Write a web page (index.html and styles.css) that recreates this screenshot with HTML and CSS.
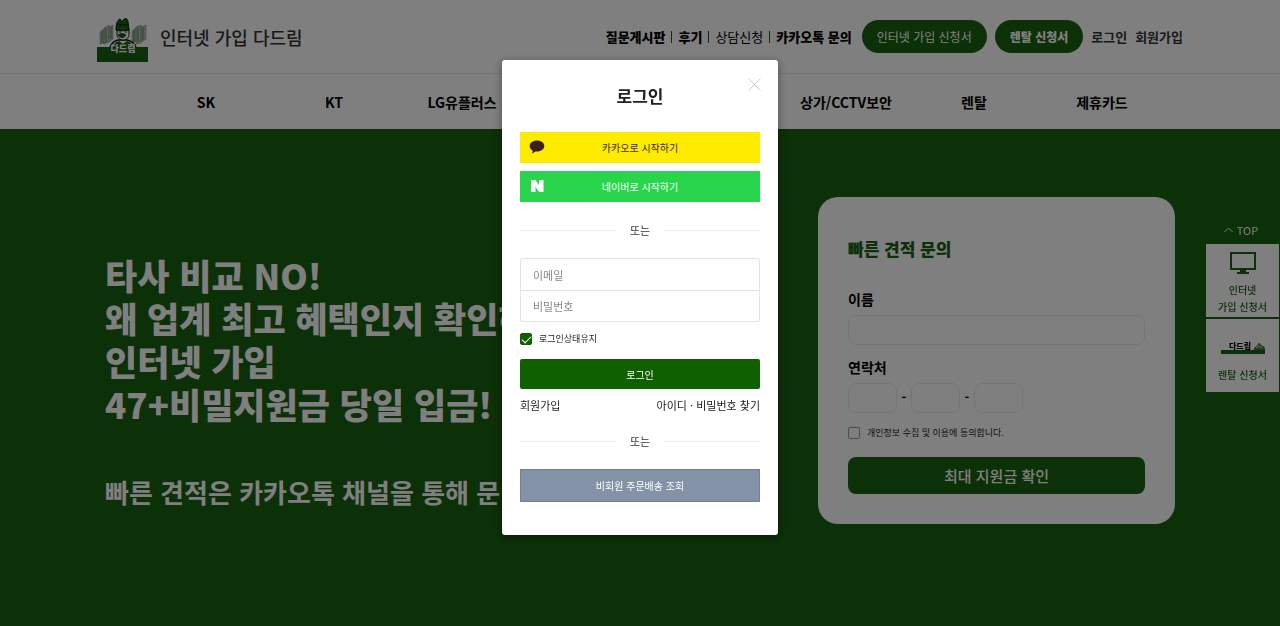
FILE: index.html
```html
<!DOCTYPE html>
<html lang="ko">
<head>
  <meta charset="UTF-8">
  <meta name="viewport" content="width=device-width, initial-scale=1">
  <title>인터넷 가입 다드림</title>
  <link rel="stylesheet" href="styles.css">
</head>
<body>
  <header class="header">
    <a class="brand" href="#">
      <svg class="brand-logo" viewBox="0 0 51 44" aria-hidden="true">
        <g fill="#b5c4b3" stroke="#8a8a8a" stroke-width=".6">
          <path d="M3 14l4-3v14l-4 1zM7 10l5-3v17l-5 2zM12 9l4-2v14l-4 3z"/>
          <path d="M35 13l4-3v13l-4 2zM39 9l5-2v18l-5 1zM44 9l5-2v14l-5 3z"/>
        </g>
        <path d="M5 13v12M9 10v15M14 9v12M37 12v12M41 9v15M46 9v13" stroke="#5d7d59"/>
        <path d="M13 30c1-5 4-7 8-8h9c5 1 8 3 9 8z" fill="#fff" stroke="#111" stroke-width="1.500"/>
        <path d="M20 11h12v5c0 4-3 6-6 6s-6-2-6-6z" fill="#fff" stroke="#111"/>
        <path d="M19 12c0-5 1-10 4-11l2 3c1-4 6-5 6 0l1 8c-4 1-9 1-13 0z" fill="#186010" stroke="#111"/>
        <path d="M20 6c3 2 7 0 11 1" fill="none" stroke="#111"/>
        <path d="M22 14h2M28 14h2" stroke="#111"/>
        <path d="M21 17c2-2 6-2 8 0-1 3-6 4-8 0z" fill="#186010" stroke="#111" stroke-width=".5"/>
        <path d="M16 30c0-4 3-6 6-7l4 3 4-3c3 1 6 3 6 7z" fill="#186010"/>
        <path d="M0 29h51v15H0z" fill="#186010"/>
        <text class="logo-text" x="26" y="34" text-anchor="middle">다드림</text>
      </svg>
      <span class="brand-name">인터넷 가입 다드림</span>
    </a>
    <div class="header-right">
      <nav class="quick-links">
        <a class="strong" href="#">질문게시판</a>
        <a class="strong" href="#">후기</a>
        <a href="#">상담신청</a>
        <a class="strong" href="#">카카오톡 문의</a>
      </nav>
      <a class="pill" href="#">인터넷 가입 신청서</a>
      <a class="pill strong" href="#">렌탈 신청서</a>
      <nav class="account">
        <a href="#">로그인</a>
        <a href="#">회원가입</a>
      </nav>
    </div>
  </header>

  <nav class="main-nav">
    <a href="#">SK</a>
    <a href="#">KT</a>
    <a href="#">LG유플러스</a>
    <a class="after-gap" href="#">상가/CCTV보안</a>
    <a href="#">렌탈</a>
    <a href="#">제휴카드</a>
  </nav>

  <main class="hero">
    <section class="hero-copy">
      <h1>타사 비교 NO!<br>왜 업계 최고 혜택인지 확인하<br>인터넷 가입<br>47+비밀지원금 당일 입금!</h1>
      <p>빠른 견적은 카카오톡 채널을 통해 문</p>
    </section>

    <form class="quote">
      <h2>빠른 견적 문의</h2>
      <label class="field-label" for="name">이름</label>
      <input class="field" id="name" type="text">
      <label class="field-label" for="phone1">연락처</label>
      <div class="phone">
        <input class="field" id="phone1" type="text">
        <span>-</span>
        <input class="field" type="text" aria-label="연락처 가운데 자리">
        <span>-</span>
        <input class="field" type="text" aria-label="연락처 끝자리">
      </div>
      <label class="agree"><input class="check" type="checkbox">개인정보 수집 및 이용에 동의합니다.</label>
      <button class="quote-submit" type="button">최대 지원금 확인</button>
    </form>
  </main>

  <aside class="side">
    <a class="side-top" href="#">
      <svg width="9" height="6" viewBox="0 0 9 6" aria-hidden="true"><path d="M.5 5l4-4 4 4" fill="none" stroke="currentColor"/></svg>
      TOP
    </a>
    <a class="side-box" href="#">
      <svg width="28" height="24" viewBox="0 0 28 24" aria-hidden="true">
        <path d="M2 2h24v16H2z" fill="none" stroke="#186010" stroke-width="2"/>
        <path d="M11 18h6v3h3v2H8v-2h3z" fill="#186010"/>
      </svg>
      <span>인터넷<br>가입 신청서</span>
    </a>
    <a class="side-box" href="#">
      <svg width="44" height="14" viewBox="0 0 44 14" aria-hidden="true">
        <text class="side-logo-text" x="8" y="9">다드림</text>
        <path d="M0 10h44v4H0z" fill="#186010"/>
        <path d="M33 10c0-3 2-3 3-4l2-3 3 3c2 0 3 2 3 4z" fill="#3d7a36" stroke="#555" stroke-width=".5"/>
        <path d="M35 8l3-2 3 2" fill="none" stroke="#ddd"/>
      </svg>
      <span>렌탈 신청서</span>
    </a>
  </aside>

  <div class="backdrop">
    <div class="modal" role="dialog" aria-modal="true" aria-labelledby="login-title">
      <button class="close" type="button" aria-label="닫기">
        <svg width="13" height="13" viewBox="0 0 13 13"><path d="M.5.5l12 12M12.500.5l-12 12" stroke="#ccc" fill="none"/></svg>
      </button>
      <h2 id="login-title">로그인</h2>
      <button class="social kakao" type="button">
        <svg width="16" height="14" viewBox="0 0 16 14" aria-hidden="true"><path d="M8 .5C3.800.5.7 2.900.7 6c0 2 1.200 3.700 3.100 4.700L3 13.600l3.500-2.200c.5.100 1 .1 1.500.1 4.200 0 7.300-2.400 7.300-5.500S12.200.5 8 .5z" fill="#3c1e1e"/></svg>
        카카오로 시작하기
      </button>
      <button class="social naver" type="button">
        <svg width="16" height="14" viewBox="0 0 16 14" aria-hidden="true"><path d="M2 1h4.500l3.500 5.200V1h4.500v12H10L6.500 7.800V13H2z" fill="#fff"/></svg>
        네이버로 시작하기
      </button>
      <div class="divider">또는</div>
      <form class="login">
        <div class="credentials">
          <input type="email" placeholder="이메일" aria-label="이메일">
          <input type="password" placeholder="비밀번호" aria-label="비밀번호">
        </div>
        <label class="keep"><input class="check" type="checkbox" checked>로그인상태유지</label>
        <button class="login-submit" type="button">로그인</button>
      </form>
      <div class="login-links">
        <a href="#">회원가입</a>
        <a href="#">아이디 · 비밀번호 찾기</a>
      </div>
      <div class="divider">또는</div>
      <button class="guest" type="button">비회원 주문배송 조회</button>
    </div>
  </div>
</body>
</html>
```

FILE: styles.css
```css
* {
  box-sizing: border-box;
}
body {
  margin: 0;
  min-height: 100vh;
  display: flex;
  flex-direction: column;
  background: #fff;
  color: #000;
  font-family: "Noto Sans CJK KR", "Noto Sans", sans-serif;
  font-size: 13px;
  overflow: hidden;
}
a {
  color: inherit;
  text-decoration: none;
}
h1, h2, p {
  margin: 0;
}
button, input {
  font-family: inherit;
}
button {
  border: none;
  cursor: pointer;
}
.strong {
  font-weight: 900;
}

/* Header */
.header {
  height: 74px;
  padding: 0 97px;
  display: flex;
  align-items: center;
  justify-content: space-between;
  border-bottom: 1px solid #e5e5e5;
  white-space: nowrap;
}
.brand {
  display: flex;
  align-items: center;
  gap: 12px;
}
.brand-logo {
  width: 51px;
  height: 44px;
  margin-top: 6px;
}
.logo-text {
  font-size: 9px;
  font-weight: 900;
  fill: #fff;
}
.brand-name {
  font-size: 18px;
  font-weight: 500;
  color: #333;
}
.header-right {
  display: flex;
  align-items: center;
  gap: 8px;
}
.quick-links {
  display: flex;
  align-items: center;
}
.quick-links a {
  line-height: 12px;
  padding: 0 6px;
}
.quick-links a + a {
  border-left: 1px solid #186010;
}
.quick-links a:last-child {
  padding-right: 2px;
}
.pill {
  height: 33px;
  padding: 0 15px;
  border-radius: 17px;
  background: #186010;
  color: #fff;
  font-size: 12px;
  line-height: 33px;
}
.account {
  display: flex;
  gap: 8px;
  font-weight: 700;
  color: #333;
}

.main-nav {
  height: 55px;
  padding: 0 114px 0 142px;
  display: grid;
  grid-template-columns: repeat(8, 1fr);
  align-items: center;
  justify-items: center;
  font-size: 14px;
  font-weight: 700;
  white-space: nowrap;
}
.main-nav .after-gap {
  grid-column-start: 6;
}

/* Hero */
.hero {
  flex: 1;
  padding: 0 105px;
  display: flex;
  align-items: flex-start;
  justify-content: space-between;
  background: #186010;
}
.hero-copy {
  padding-top: 124px;
  color: #fff;
  white-space: nowrap;
}
.hero-copy h1 {
  font-size: 35px;
  line-height: 43px;
  font-weight: 900;
}
.hero-copy p {
  margin-top: 48px;
  font-size: 26px;
  line-height: 38px;
  font-weight: 700;
}
.quote {
  width: 357px;
  margin-top: 68px;
  padding: 36px 30px 30px;
  display: flex;
  flex-direction: column;
  border-radius: 20px;
  background: #fff;
}
.quote h2 {
  margin-bottom: 24px;
  color: #186010;
  font-size: 17px;
  line-height: 32px;
  font-weight: 900;
}
.field-label {
  margin-bottom: 6px;
  font-size: 14px;
  line-height: 20px;
  font-weight: 700;
}
.field {
  width: 100%;
  height: 30px;
  margin-bottom: 12px;
  border: 1px solid #eaeaea;
  border-radius: 8px;
  background: transparent;
}
.phone {
  display: flex;
}
.phone .field {
  width: 49px;
}
.phone span {
  width: 14px;
  line-height: 28px;
  text-align: center;
  font-weight: 700;
}
.agree, .keep {
  display: flex;
  align-items: center;
  gap: 7px;
  font-size: 9px;
  line-height: 16px;
  color: #222;
}
.check {
  appearance: none;
  width: 12px;
  height: 12px;
  margin: 0;
  border: 1px solid #999;
  border-radius: 2px;
  display: grid;
  place-items: center;
}
.check:checked {
  border-color: #0f6000;
  background: #0f6000;
}
.check:checked::before {
  content: "";
  width: 8px;
  height: 4px;
  margin-bottom: 2px;
  border: solid #fff;
  border-width: 0 0 1px 1px;
  transform: rotate(-45deg);
}
.quote-submit {
  height: 37px;
  margin-top: 16px;
  border-radius: 8px;
  background: #186010;
  color: #fff;
  font-size: 15px;
  font-weight: 500;
}

/* Side buttons */
.side {
  position: fixed;
  top: 216px;
  right: 0;
  width: 75px;
  text-align: center;
  color: #186010;
}
.side-top {
  height: 27px;
  padding-right: 3px;
  display: flex;
  align-items: center;
  justify-content: center;
  gap: 4px;
  color: #fff;
  font-size: 11px;
}
.side-box {
  height: 75px;
  padding-top: 4px;
  display: flex;
  flex-direction: column;
  align-items: center;
  justify-content: center;
  gap: 6px;
  border: 1px solid #186010;
  background: #fff;
  font-size: 10px;
  line-height: 17px;
  font-weight: 500;
}
.side-box:last-child {
  padding-top: 12px;
  gap: 12px;
}
.side-logo-text {
  font-size: 8px;
  font-weight: 900;
  fill: #000;
}

/* Login dialog */
.backdrop {
  position: fixed;
  inset: 0;
  padding-top: 60px;
  background: rgba(0, 0, 0, 0.5);
}
.modal {
  position: relative;
  width: 276px;
  margin: 0 auto;
  padding: 18px 18px 33px;
  border-radius: 3px;
  background: #fff;
  box-shadow: 0 2px 8px rgba(0, 0, 0, 0.4);
}
.modal h2 {
  padding: 6px 0 24px;
  text-align: center;
  font-size: 17px;
  line-height: 24px;
  color: #212121;
}
.close {
  position: absolute;
  top: 18px;
  right: 17px;
  padding: 0;
  background: none;
  line-height: 0;
}
.social {
  position: relative;
  display: block;
  width: 100%;
  height: 31px;
  margin-bottom: 8px;
  font-size: 10px;
}
.social svg {
  position: absolute;
  top: 8px;
  left: 9px;
}
.kakao {
  background: #ffeb00;
  color: #3c1e1e;
}
.naver {
  background: #28d54c;
  color: #fff;
}
.divider {
  display: flex;
  align-items: center;
  gap: 14px;
  margin: 20px 0;
  font-size: 11px;
  line-height: 16px;
  color: #333;
}
.divider::before, .divider::after {
  content: "";
  flex: 1;
  height: 1px;
  background: #eee;
}
.credentials {
  border: 1px solid #e5e5e5;
  border-radius: 2px;
}
.credentials input {
  display: block;
  width: 100%;
  height: 31px;
  padding: 0 12px;
  border: none;
  background: transparent;
  font-size: 11px;
}
.credentials input + input {
  border-top: 1px solid #e5e5e5;
}
.credentials input::placeholder {
  color: #888;
}
.keep {
  margin: 9px 0 12px;
}
.login-submit {
  display: block;
  width: 100%;
  height: 30px;
  border-radius: 2px;
  background: #0f6000;
  color: #fff;
  font-size: 10px;
}
.login-links {
  display: flex;
  justify-content: space-between;
  margin-top: 8px;
  font-size: 11px;
  line-height: 16px;
  color: #212121;
}
.guest {
  display: block;
  width: 100%;
  height: 33px;
  border: 1px solid #718096;
  background: #8492a8;
  color: #fff;
  font-size: 10px;
}
```
